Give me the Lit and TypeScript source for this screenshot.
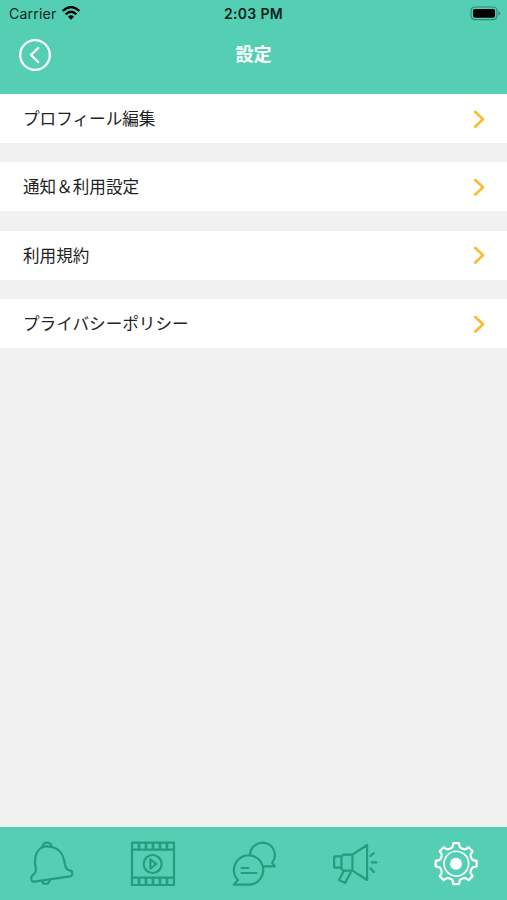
import { LitElement, html, svg, css } from "lit";
import { customElement } from "lit/decorators.js";

const ROWS = ["プロフィール編集", "通知＆利用設定", "利用規約", "プライバシーポリシー"];

// Outline of an eight-toothed cog around (cx, cy).
function cog(cx: number, cy: number, root: number, tip: number): string {
  const pts: string[] = [];
  for (let i = 0; i < 8; i++) {
    const mid = (i * 45 - 90) * Math.PI / 180;
    const steps: [number, number][] = [[-17, root], [-12, root + 2.5], [-8, tip], [8, tip], [12, root + 2.5], [17, root]];
    for (const [deg, r] of steps) {
      const a = mid + deg * Math.PI / 180;
      pts.push(`${(cx + r * Math.cos(a)).toFixed(1)} ${(cy + r * Math.sin(a)).toFixed(1)}`);
    }
  }
  return `M${pts.join("L")}Z`;
}

const TABS = [
  {
    name: "bell", box: "35 58 144 144", active: false,
    art: svg`<path d="M78 81C68 88 59 102 59 123C60 140 65 151 58 158C50 163 46 168 48 177Q49 184 57 183L164 167Q172 165 171 157Q170 149 162 149C150 147 149 134 147 121C143 98 128 82 108 79Q90 75 78 81Z"/>
      <path d="M81 80C81 62 108 60 109 79M80 181C83 194 101 193 104 177"/>`,
  },
  {
    name: "film", box: "39 58 144 144", active: false,
    art: svg`<path d="M51 66H177V193H51ZM51 87H177M51 171H177"/>
      <path class="bars" d="M72 66V87M93 66V87M114 66V87M135 66V87M156 66V87M72 171V193M93 171V193M114 171V193M135 171V193M156 171V193"/>
      <circle cx="113" cy="130" r="27"/><path d="M106 116V144L124 130Z"/>`,
  },
  {
    name: "chat", box: "43.5 58 144 144", active: false,
    art: svg`<path d="M55 192L67 178A44 44 0 1 1 101 192Z"/>
      <path d="M104 104A37 37 0 1 1 170 126L178 137H145M78 142H99M78 157H123"/>`,
  },
  {
    name: "megaphone", box: "32.7 58 144 144", active: false,
    art: svg`<path d="M64 107H45Q42 107 42 112V136Q42 141 46 141H64M64 107L70 102H97V150H70L64 144ZM97 102L141 73V178L97 150M71 151L57 178L75 187L94 151M151 106L161 97M155 125H169M151 143L161 154"/>`,
  },
  {
    name: "settings", box: "37 58 144 144", active: true,
    art: svg`<path d=${cog(109.5, 129, 49, 62)}/>
      <path class="thin" d="M101 93A37 37 0 1 1 81 106M85 102L88 99M92 96L95 95"/>
      <circle class="solid" cx="109" cy="129" r="18"/>`,
  },
];

@customElement("app-root")
export class AppRoot extends LitElement {
  static styles = css`
    :host {
      display: flex;
      flex-direction: column;
      height: 900px;
      background: #f1f1f1;
      color: #222;
      font-family: "Noto Sans CJK JP", sans-serif;
    }
    svg { display: block; fill: none; stroke: currentColor; stroke-linecap: round; stroke-linejoin: round; }
    .top { height: 94px; flex: none; background: #54cfb3; }
    .status {
      display: grid;
      grid-template-columns: 1fr auto 1fr;
      align-items: center;
      height: 26px;
      padding: 0 6px 2px 9px;
      font-family: Inter, sans-serif;
      color: #0b2922;
    }
    .carrier { display: flex; align-items: center; gap: 6px; font-size: 14.2px; letter-spacing: 0.12px; }
    .wifi { color: #000; stroke-linecap: butt; }
    .time { font-size: 14px; font-weight: 600; letter-spacing: 0.35px; margin-right: 3px; color: #06201a; }
    .battery { justify-self: end; }
    .nav {
      display: grid;
      grid-template-columns: 1fr auto 1fr;
      align-items: center;
      height: 54px;
      padding: 0 19px;
      color: #fff;
    }
    .title { font-size: 18px; font-weight: 700; line-height: 24px; margin-top: -5px; }
    .list { flex: 1; display: flex; flex-direction: column; gap: 19.4px; }
    .row {
      display: flex;
      align-items: center;
      justify-content: space-between;
      height: 49px;
      padding: 0 22px 0 23px;
      background: #fff;
      font-size: 16.6px;
      line-height: 24px;
    }
    .label { margin-top: -1.2px; }
    .chevron { color: #f8bd32; }
    .tabs { display: flex; height: 73px; flex: none; background: #54cfb3; }
    .tab { flex: 1; display: flex; align-items: center; justify-content: center; color: #259b7f; }
    .tab svg { stroke-width: 6.6; }
    .tab.active { color: #fff; }
    .bars { stroke-width: 8; stroke-linecap: butt; }
    .thin { stroke-width: 5; }
    .solid { fill: currentColor; stroke: none; }
  `;

  render() {
    return html`
      <header class="top">
        <div class="status">
          <div class="carrier">
            <span>Carrier</span>
            <svg class="wifi" width="18" height="14" viewBox="0 0 54 42" stroke-width="7">
              <path d="M2 15Q27 -9 52 15M11 25Q27 10 43 25" />
              <path d="M18 32Q27 24 36 32L27 41Z" fill="currentColor" stroke="none" />
            </svg>
          </div>
          <span class="time">2:03 PM</span>
          <svg class="battery" width="31" height="15" viewBox="0 0 31 15">
            <rect x="1" y="1" width="26" height="12.6" rx="3.8" stroke="#308a75" stroke-width="1.2" />
            <rect x="3" y="3" width="22" height="8.8" rx="1.8" fill="#000" stroke="none" />
            <path d="M28.5 5Q32 7.3 28.5 9.6Z" fill="#308a75" stroke="none" />
          </svg>
        </div>
        <div class="nav">
          <svg width="32" height="32" viewBox="0 0 32 32" stroke-width="2.3">
            <circle cx="16" cy="16" r="14.8" />
            <path d="M19.2 9L12 16L19.2 23" />
          </svg>
          <span class="title">設定</span>
        </div>
      </header>
      <main class="list">
        ${ROWS.map((label) => html`
          <div class="row">
            <span class="label">${label}</span>
            <svg class="chevron" width="12" height="18" viewBox="0 0 12 18" stroke-width="2.7">
              <path d="M2.3 2L10 9.3L2.3 16.6" />
            </svg>
          </div>`)}
      </main>
      <nav class="tabs">
        ${TABS.map((t) => html`
          <div class="tab ${t.active ? "active" : ""}" aria-label=${t.name}>
            <svg width="48" height="48" viewBox=${t.box}>${t.art}</svg>
          </div>`)}
      </nav>
    `;
  }
}
